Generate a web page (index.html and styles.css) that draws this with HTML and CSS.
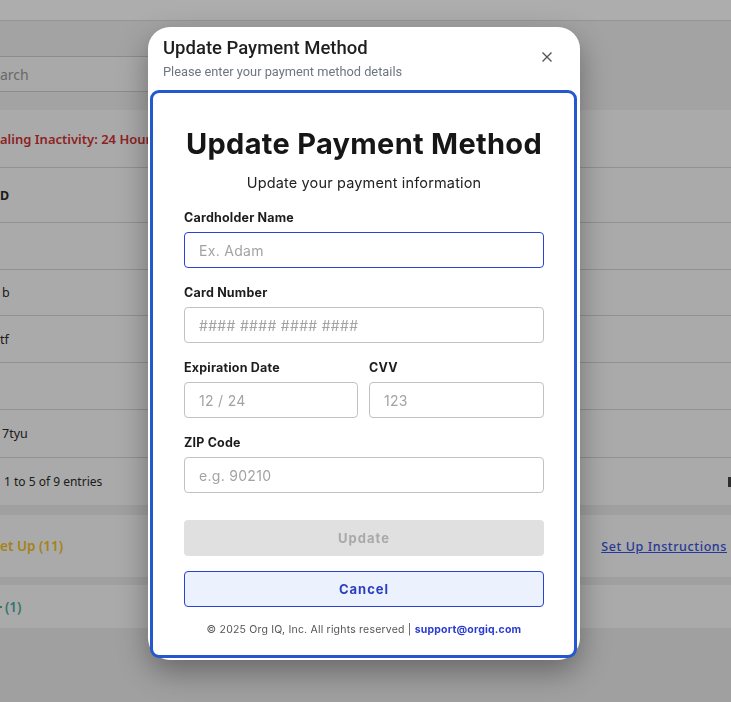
FILE: index.html
```html
<!DOCTYPE html>
<html>
<head>
<meta charset="utf-8">
<link rel="stylesheet" href="styles.css">
</head>
<body>
<div class="page">
  <div class="topbar"></div>
  <div class="toolband">
    <div class="search">arch</div>
  </div>
  <div class="table">
    <div class="row alert"><span>aling Inactivity: 24 Hours</span></div>
    <div class="row head"><span>D</span></div>
    <div class="row r47"></div>
    <div class="row r46"><span class="shift2">b</span></div>
    <div class="row r47"><span>tf</span></div>
    <div class="row r47"></div>
    <div class="row r48"><span class="shift2">7tyu</span></div>
    <div class="row pager"><span class="shift4">1 to 5 of 9 entries</span><span class="edge"></span></div>
  </div>
  <div class="card setup">
    <span class="gold">et Up (11)</span>
    <a class="instr">Set Up Instructions</a>
  </div>
  <div class="card small">
    <span class="tick"></span><span class="teal">(1)</span>
  </div>
</div>
<div class="overlay"></div>
<div class="modal">
  <div class="mhead">
    <div class="mtitles">
      <div class="mtitle">Update Payment Method</div>
      <div class="msub">Please enter your payment method details</div>
    </div>
    <svg class="close" width="12" height="12" viewBox="0 0 12 12"><path d="M1.5 1.5 L10.5 10.5 M10.5 1.5 L1.5 10.5" stroke="#555" stroke-width="1.4" fill="none"/></svg>
  </div>
  <div class="frame">
    <h1 class="ftitle">Update Payment Method</h1>
    <p class="fsub">Update your payment information</p>
    <div class="field">
      <label>Cardholder Name</label>
      <input class="inp focused" placeholder="Ex. Adam" autofocus>
    </div>
    <div class="field">
      <label>Card Number</label>
      <input class="inp" placeholder="#### #### #### ####">
    </div>
    <div class="pair">
      <div class="field">
        <label>Expiration Date</label>
        <input class="inp" placeholder="12 / 24">
      </div>
      <div class="field">
        <label>CVV</label>
        <input class="inp" placeholder="123">
      </div>
    </div>
    <div class="field">
      <label>ZIP Code</label>
      <input class="inp" placeholder="e.g. 90210">
    </div>
    <button class="btn update">Update</button>
    <button class="btn cancel">Cancel</button>
    <p class="foot">© 2025 Org IQ, Inc. All rights reserved | <b>support@orgiq.com</b></p>
  </div>
</div>
</body>
</html>
```
FILE: styles.css
```css
* { box-sizing: border-box; }
html, body { margin: 0; padding: 0; }
body {
  width: 731px;
  height: 702px;
  overflow: hidden;
  background: #ececec;
  font-family: "Noto Sans", "Inter", sans-serif;
  color: #333;
}
.page { width: 731px; }
.topbar { height: 21px; background: #ffffff; border-bottom: 1px solid #dcdcdc; }
.toolband { height: 89px; background: #f1f1f1; padding-top: 35px; }
.search {
  width: 160px; height: 36px;
  background: #f9f9f9;
  border-top: 1px solid #cfcfcf; border-bottom: 1px solid #cfcfcf;
  font-size: 14px; color: #9a9a9a;
  display: flex; align-items: center;
}
.table { background: #fbfbfb; }
.row {
  display: flex; align-items: center;
  border-bottom: 1px solid #d6d6d6;
  font-size: 12.5px; color: #2b2b2b;
}
.row.alert { height: 58px; color: #cf3434; font-weight: 600; font-size: 13px; }
.row.head { height: 55px; font-weight: 700; }
.row.r47 { height: 47px; }
.row.r46 { height: 46px; }
.row.r48 { height: 48px; }
.row.pager { height: 47px; border-bottom: none; justify-content: space-between; }
.shift2 { padding-left: 2px; }
.shift4 { padding-left: 4px; font-size: 12px; }
.edge { width: 3px; height: 10px; background: #444; }
.card {
  background: #fbfbfb;
  display: flex; align-items: center;
  font-size: 13.5px; font-weight: 600;
}
.card.setup { margin-top: 10px; height: 62px; justify-content: space-between; }
.card.small { margin-top: 8px; height: 43px; }
.gold { color: #f2c12a; }
.tick { width: 2px; height: 2px; background: #4fae9f; margin-right: 3px; }
.teal { color: #4fae9f; }
.instr {
  color: #3a55e0; text-decoration: underline; font-weight: 500;
  font-size: 12.5px;
  letter-spacing: 0.6px; margin-right: 4px;
}
.overlay {
  position: fixed; inset: 0;
  background: rgba(0, 0, 0, 0.32);
}
.modal {
  position: absolute;
  left: 148px; top: 27px;
  width: 432px; height: 633px;
  background: #fff;
  border-radius: 22px;
  box-shadow: 0 12px 30px rgba(0,0,0,0.35);
  padding: 0 3px 2px 2px;
  display: flex; flex-direction: column;
}
.mhead {
  display: flex; justify-content: space-between; align-items: flex-start;
  padding: 11px 24px 0 13px;
  height: 63px;
}
.mtitle {
  font-family: "Roboto", sans-serif;
  font-size: 18.5px; font-weight: 500; color: #1f1f1f;
  line-height: 20px;
}
.msub {
  font-family: "Roboto", sans-serif;
  font-size: 12.8px; color: #6f7682;
  margin-top: 6px; line-height: 16px;
}
.close { margin-top: 13px; }
.frame {
  flex: 1;
  border: 3px solid #2358cf;
  border-radius: 9px;
  padding: 33px 30px 0 31px;
  display: flex; flex-direction: column;
  font-family: "Inter", sans-serif;
}
.ftitle {
  margin: 0; text-align: center;
  font-size: 29px; font-weight: 700; color: #161616;
  line-height: 36px; letter-spacing: 0.3px;
}
.fsub {
  margin: 11px 0 0; text-align: center;
  font-size: 14.5px; color: #222; line-height: 20px;
  letter-spacing: 0.15px;
}
.field { display: flex; flex-direction: column; margin-top: 16px; }
.field label {
  font-size: 12.5px; font-weight: 700; color: #1c1c1c;
  line-height: 18px; margin-bottom: 5px; letter-spacing: 0.2px;
}
.inp {
  height: 36px; width: 100%;
  border: 1px solid #c2c2c2; border-radius: 4px;
  padding: 0 14px;
  font-family: "Inter", sans-serif; font-size: 14px; color: #333;
  outline: none; background: #fff;
}
.inp::placeholder { color: #a3a3a3; letter-spacing: 0.3px; }
.inp.focused { border-color: #2a43d6; }
.pair { display: grid; grid-template-columns: 174px 175px; gap: 11px; }
.btn {
  height: 36px; width: 100%;
  border-radius: 4px;
  font-family: "Inter", sans-serif; font-size: 13px; font-weight: 700;
  letter-spacing: 1px;
}
.btn.update {
  margin-top: 27px;
  background: #e0e0e0; border: none; color: #a9a9a9;
}
.btn.cancel {
  margin-top: 15px;
  background: #ebf1fd; border: 1px solid #2a43d6; color: #2b3fbe;
}
.foot {
  margin: 16px 0 0; text-align: center;
  font-size: 10.5px; color: #555; line-height: 14px; letter-spacing: 0.2px;
}
.foot b { color: #2a3bd0; font-weight: 700; }
```
